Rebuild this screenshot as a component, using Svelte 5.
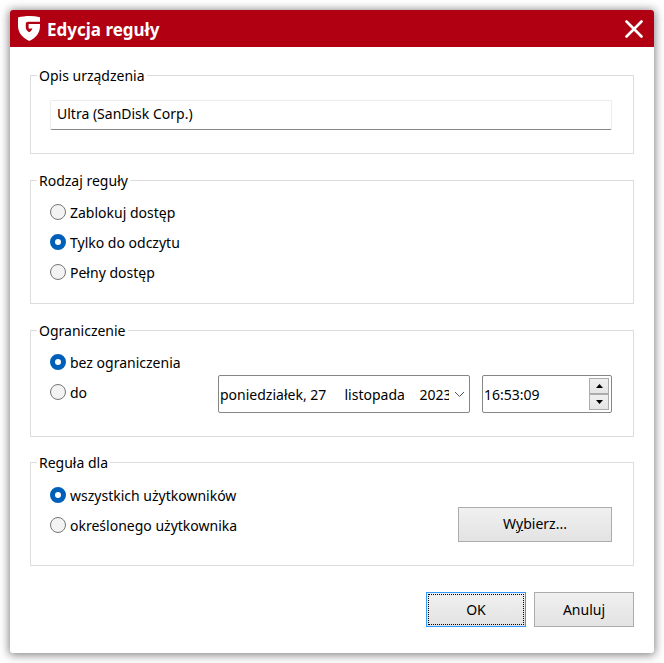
<script lang="ts">
	let device = 'Ultra (SanDisk Corp.)';
	let access = 'read';
	let limit = 'none';
	let scope = 'all';
	let date = 'poniedziałek, 27     listopada    2023';
	let time = '16:53:09';

	const accessOptions = [
		{ value: 'block', label: 'Zablokuj dostęp' },
		{ value: 'read', label: 'Tylko do odczytu' },
		{ value: 'full', label: 'Pełny dostęp' }
	];

	const stepTime = (by: number) => {
		const [h, m, s] = time.split(':').map(Number);
		const total = (h * 3600 + m * 60 + s + by + 86400) % 86400;
		time = [Math.floor(total / 3600), Math.floor(total / 60) % 60, total % 60]
			.map((n) => String(n).padStart(2, '0'))
			.join(':');
	};
</script>

<div class="desktop">
	<form class="dialog" on:submit|preventDefault>
		<header class="titlebar">
			<svg class="logo" width="22" height="25" viewBox="0 0 22 25" aria-hidden="true">
				<path fill="#fff" d="M0 1.6C7 -.4 15 -.4 22 1.2V5.8H10.2C8.6 5.8 7.8 6.6 7.8 8.2V11.4C7.8 13.4 9 14.8 11.2 16.2C13 15 14 14 14.4 12.4H10.6V8H22V9.4C22 17 18.4 21.4 11.2 25C3.8 21 0 16.4 0 9.4Z" />
			</svg>
			<h1>Edycja reguły</h1>
			<button type="button" class="close" aria-label="Zamknij">
				<svg width="18" height="18" viewBox="0 0 18 18" aria-hidden="true">
					<path d="M1.5 1.5L16.5 16.5M16.5 1.5L1.5 16.5" stroke="#fff" stroke-width="2.6" stroke-linecap="round" />
				</svg>
			</button>
		</header>

		<div class="body">
			<fieldset class="group group--device">
				<legend>Opis urządzenia</legend>
				<input class="device" type="text" aria-label="Opis urządzenia" bind:value={device} />
			</fieldset>

			<fieldset class="group">
				<legend>Rodzaj reguły</legend>
				{#each accessOptions as option}
					<label class="radio">
						<input type="radio" name="access" value={option.value} bind:group={access} />
						{option.label}
					</label>
				{/each}
			</fieldset>

			<fieldset class="group group--limit">
				<legend>Ograniczenie</legend>
				<label class="radio">
					<input type="radio" name="limit" value="none" bind:group={limit} />
					bez ograniczenia
				</label>
				<div class="row">
					<label class="radio">
						<input type="radio" name="limit" value="until" bind:group={limit} />
						do
					</label>
					<div class="picker picker--date">
						<input type="text" aria-label="Data" bind:value={date} />
						<button type="button" class="drop" aria-label="Otwórz kalendarz">
							<svg width="11" height="7" viewBox="0 0 11 7" aria-hidden="true">
								<path d="M1 1L5.5 5.5L10 1" fill="none" stroke="#555" />
							</svg>
						</button>
					</div>
					<div class="picker picker--time">
						<input type="text" aria-label="Godzina" bind:value={time} />
						<div class="spin">
							<button type="button" aria-label="Później" on:click={() => stepTime(1)}>
								<svg width="7" height="4" viewBox="0 0 7 4" aria-hidden="true"><path d="M0 4L3.5 0L7 4Z" /></svg>
							</button>
							<button type="button" aria-label="Wcześniej" on:click={() => stepTime(-1)}>
								<svg width="7" height="4" viewBox="0 0 7 4" aria-hidden="true"><path d="M0 0H7L3.5 4Z" /></svg>
							</button>
						</div>
					</div>
				</div>
			</fieldset>

			<fieldset class="group group--scope">
				<legend>Reguła dla</legend>
				<label class="radio">
					<input type="radio" name="scope" value="all" bind:group={scope} />
					wszystkich użytkowników
				</label>
				<div class="row">
					<label class="radio">
						<input type="radio" name="scope" value="one" bind:group={scope} />
						określonego użytkownika
					</label>
					<button type="button" class="btn btn--wide">W<u>y</u>bierz...</button>
				</div>
			</fieldset>

			<footer class="actions">
				<button type="submit" class="btn btn--default">OK</button>
				<button type="button" class="btn">Anuluj</button>
			</footer>
		</div>
	</form>
</div>

<style>
	:global(body) {
		background: #fff;
	}
	.desktop {
		padding: 10px;
	}
	.dialog,
	.dialog input,
	.dialog button {
		box-sizing: border-box;
		font-family: 'Noto Sans', 'Open Sans', sans-serif;
		font-size: 14px;
		line-height: 20px;
		color: #000;
	}
	.dialog {
		background: #fff;
		border-radius: 3px;
		box-shadow: 0 1px 10px 1px rgba(0, 0, 0, 0.5);
		overflow: hidden;
	}
	.titlebar {
		display: flex;
		align-items: center;
		height: 37px;
		padding: 0 9px 0 8px;
		background: #b00012;
	}
	h1 {
		flex: 1;
		margin: 2px 0 0 7px;
		font-size: 17px;
		line-height: 24px;
		font-weight: 700;
		color: #fff;
	}
	.close {
		display: flex;
		padding: 2px;
		border: 0;
		background: none;
	}
	.body {
		padding: 18px 20px 26px;
	}
	.group {
		min-width: 0;
		margin: 0 0 16px;
		padding: 7px 21px 15px 19px;
		border: 1px solid #dcdcdc;
	}
	.group--device {
		padding-top: 14px;
		padding-bottom: 23px;
	}
	.group--limit {
		padding-bottom: 28px;
		margin-bottom: 15px;
	}
	.group--scope {
		padding-top: 8px;
		padding-bottom: 24px;
		margin-bottom: 26px;
	}
	legend {
		height: 21px;
		margin-left: -13px;
		padding: 0 2px;
		line-height: 22px;
	}
	.device {
		display: block;
		width: 100%;
		height: 30px;
		padding: 0 6px 3px;
		border: 1px solid #ececec;
		border-bottom-color: #868686;
		border-radius: 2px;
		background: #fff;
	}
	.radio {
		display: flex;
		align-items: center;
		gap: 4px;
		height: 30px;
		white-space: nowrap;
	}
	.radio input {
		appearance: none;
		flex: none;
		width: 16px;
		height: 16px;
		margin: 0 0 2px;
		border: 1px solid #757575;
		border-radius: 50%;
		background: #f3f3f3;
	}
	.radio input:checked {
		border: 5px solid #005fb8;
		background: #fff;
	}
	.row {
		display: flex;
		align-items: center;
		height: 30px;
	}
	.row .radio {
		flex: 1;
	}
	.picker {
		display: flex;
		flex: none;
		box-sizing: border-box;
		height: 38px;
		margin-top: 2px;
		border: 1px solid #868686;
		border-radius: 2px;
		background: #fff;
	}
	.picker input {
		flex: 1;
		min-width: 0;
		padding: 1px 0 0 1px;
		border: 0;
		background: none;
	}
	.picker--date {
		width: 252px;
		margin-right: 12px;
	}
	.picker--time {
		width: 130px;
	}
	.drop {
		display: flex;
		align-items: center;
		justify-content: center;
		width: 20px;
		padding: 0;
		border: 0;
		background: none;
	}
	.spin {
		display: flex;
		flex-direction: column;
		width: 20px;
		margin: 2px;
	}
	.spin button {
		display: flex;
		flex: 1;
		align-items: center;
		justify-content: center;
		padding: 0;
		border: 1px solid #acacac;
		background: linear-gradient(#f0f0f0, #e5e5e5);
	}
	.btn {
		width: 100px;
		height: 35px;
		padding: 0;
		border: 1px solid #acacac;
		background: linear-gradient(#f0f0f0, #e3e3e3);
	}
	.btn--wide {
		width: 154px;
		margin-bottom: 4px;
	}
	.btn--default {
		border-color: #3399ff;
		outline: 1px dotted #000;
		outline-offset: -3px;
	}
	.actions {
		display: flex;
		justify-content: flex-end;
		gap: 8px;
	}
</style>
